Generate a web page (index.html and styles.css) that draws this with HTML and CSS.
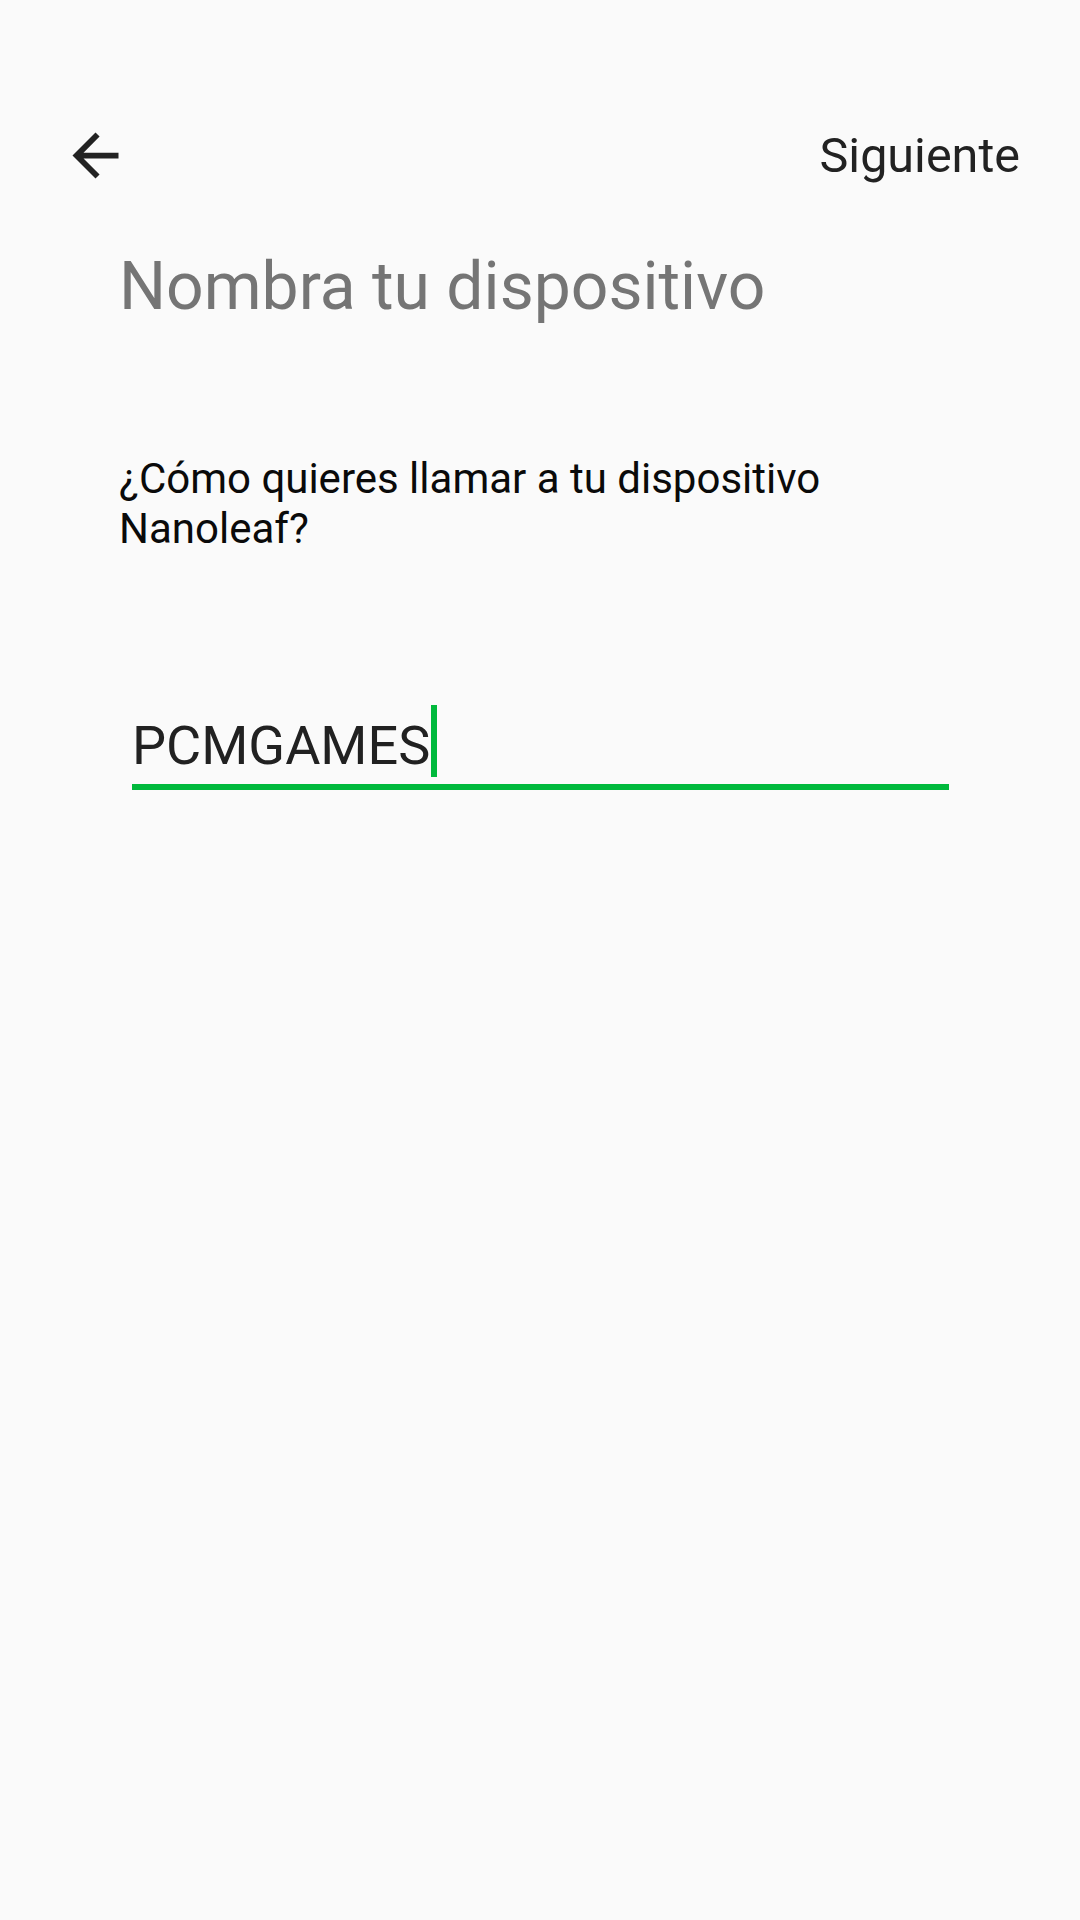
FILE: index.html
```html
<!DOCTYPE html>
<html lang="es">
<head>
    <meta charset="UTF-8">
    <meta name="viewport" content="width=device-width, initial-scale=1.0">
    <title>Nombra tu dispositivo</title>
    <link rel="stylesheet" href="styles.css">
</head>
<body>

    <!-- Top bar: back arrow and next action -->
    <header class="toolbar">
        <span class="back-btn">
            <svg viewBox="0 0 24 24" width="69" height="69">
                <path d="M20 11H7.83l5.59-5.59L12 4l-8 8 8 8 1.41-1.41L7.83 13H20v-2z" fill="#222222"/>
            </svg>
        </span>
        <span class="next-btn">Siguiente</span>
    </header>

    <main class="content">
        <h1 class="title">Nombra tu dispositivo</h1>
        <p class="question">¿Cómo quieres llamar a tu dispositivo Nanoleaf?</p>

        <!-- Name input (focused) -->
        <div class="field">
            <span class="field-text">PCMGAMES</span>
            <span class="cursor"></span>
        </div>
    </main>

</body>
</html>
```

FILE: styles.css
```css
/* General Styles */
body {
    margin: 0;
    background-color: #fafafa;
    font-family: Roboto, 'Noto Sans', sans-serif;
    width: 1080px;
    height: 1920px;
}

.toolbar {
    display: flex;
    justify-content: space-between;
    align-items: center;
    height: 69px;
    padding: 121px 60px 0 61px;
}

.back-btn {
    display: flex;
    width: 69px;
    height: 69px;
}

.next-btn {
    font-size: 48.5px;
    color: #222222;
}

.content {
    padding: 0 120px 0 119px;
}

.title {
    margin: 58px 0 0 0;
    font-size: 66px;
    font-weight: 400;
    line-height: normal;
    color: #757575;
}

.question {
    margin: 129px 0 0 0;
    font-size: 42px;
    line-height: 50px;
    color: #0a0a0a;
    width: 760px;
}

/* Input with green underline */
.field {
    display: flex;
    align-items: flex-end;
    height: 72px;
    margin: 151px 0 0 13px;
    padding-bottom: 7px;
    border-bottom: 6px solid #00b93c;
    width: 817px;
}

.field-text {
    font-size: 54px;
    color: #212121;
}

.cursor {
    display: inline-block;
    width: 6px;
    height: 72px;
    margin-left: 1px;
    background-color: #00b93c;
}
```
